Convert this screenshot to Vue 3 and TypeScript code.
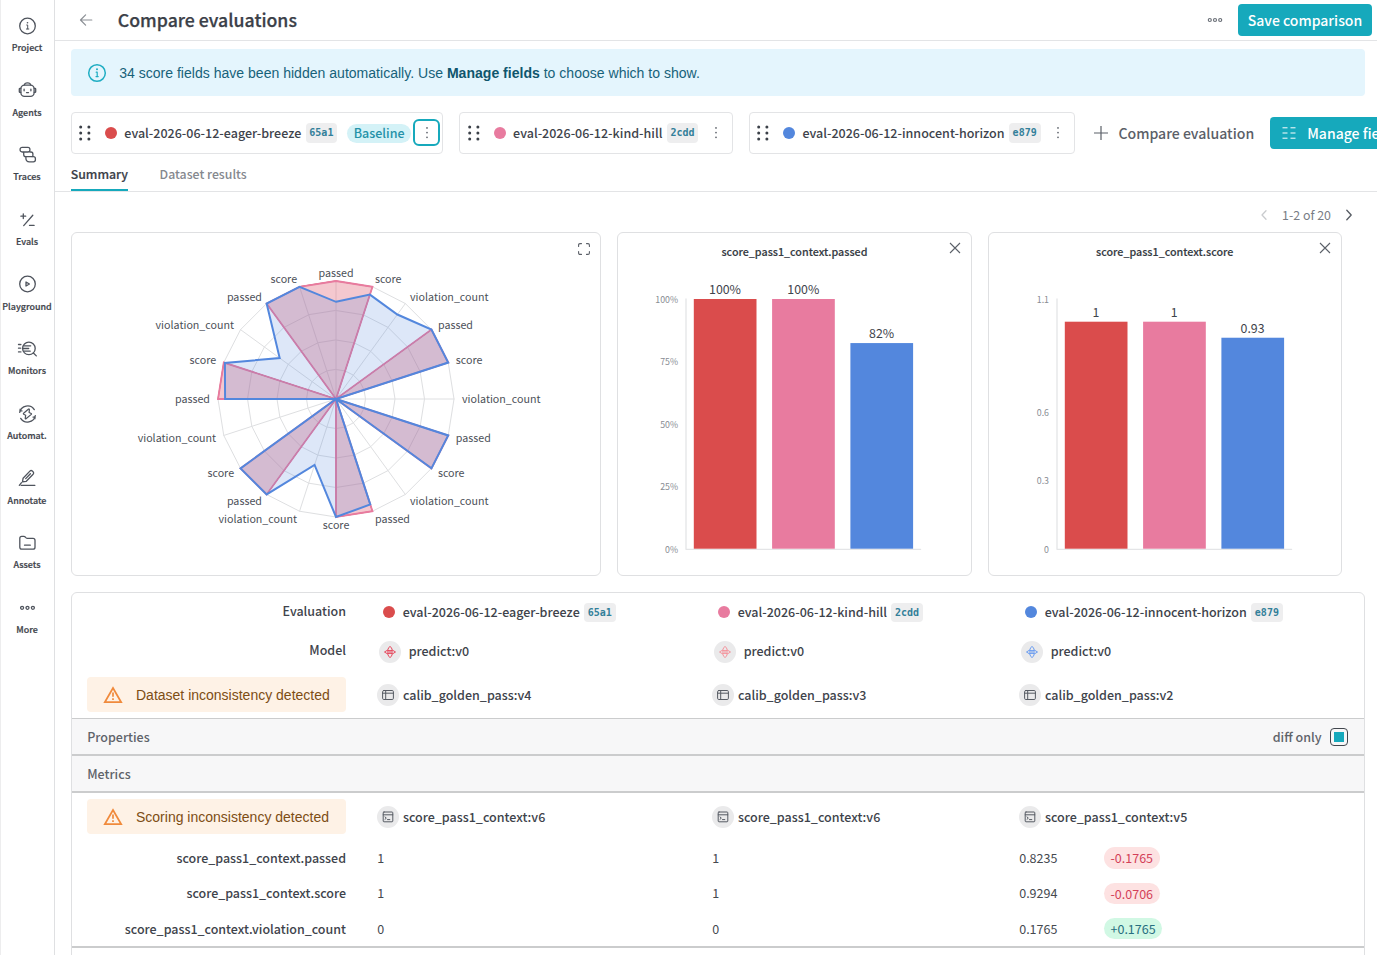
<script setup lang="ts">
interface Evaluation { name: string; hash: string; color: string; baseline?: boolean; dataset: string; scorer: string }
interface Bar { value: number; label: string }
interface BarChart { title: string; max: number; ticks: { y: number; text: string }[]; bars: Bar[] }

const nav = ['Project', 'Agents', 'Traces', 'Evals', 'Playground', 'Monitors', 'Automat.', 'Annotate', 'Assets', 'More']

const RED = '#da4c4c'
const PINK = '#e87b9f'
const BLUE = '#5387dd'

const evaluations: Evaluation[] = [
  { name: 'eval-2026-06-12-eager-breeze', hash: '65a1', color: RED, baseline: true, dataset: 'calib_golden_pass:v4', scorer: 'score_pass1_context:v6' },
  { name: 'eval-2026-06-12-kind-hill', hash: '2cdd', color: PINK, dataset: 'calib_golden_pass:v3', scorer: 'score_pass1_context:v6' },
  { name: 'eval-2026-06-12-innocent-horizon', hash: 'e879', color: BLUE, dataset: 'calib_golden_pass:v2', scorer: 'score_pass1_context:v5' },
]
const modelColors = ['#e5394f', '#f58a94', '#5c94f0']

const metrics = [
  { name: 'score_pass1_context.passed', values: ['1', '1', '0.8235'], delta: '-0.1765', good: false },
  { name: 'score_pass1_context.score', values: ['1', '1', '0.9294'], delta: '-0.0706', good: false },
  { name: 'score_pass1_context.violation_count', values: ['0', '0', '0.1765'], delta: '+0.1765', good: true },
]

/* Radar geometry */
const CX = 264
const CY = 166
const R = 118
const axes = [
  'passed', 'score', 'violation_count', 'passed', 'score', 'violation_count', 'passed', 'score', 'violation_count', 'passed',
  'score', 'violation_count', 'passed', 'score', 'violation_count', 'passed', 'score', 'violation_count', 'passed', 'score',
]
const full = axes.map((a) => (a === 'violation_count' ? 0 : 1))
const blueValues = [0.8235, 0.93, 0.885, 1, 1, 0, 1, 1, 0, 0.94, 1, 0.588, 1, 1, 0, 0.94, 0.99, 0.59, 1, 1]

function at(i: number, r: number): [number, number] {
  const t = (i * 18 * Math.PI) / 180
  return [CX + Math.sin(t) * r, CY - Math.cos(t) * r]
}
function polygon(values: number[]): string {
  return values.map((v, i) => at(i, v * R).map((n) => n.toFixed(2)).join(',')).join(' ')
}
const rings = [0.25, 0.5, 0.75, 1].map((k) => polygon(axes.map(() => k)))
const spokes = axes.map((_, i) => at(i, R))
const labels = axes.map((text, i) => {
  const [x, y] = at(i, 126)
  const anchor = i % 10 === 0 ? 'middle' : i < 10 ? 'start' : 'end'
  return { text, x, y: y + 4.2, anchor }
})
const series = [
  { points: polygon(full), color: RED, width: 1 },
  { points: polygon(full), color: PINK, width: 1.8 },
  { points: polygon(blueValues), color: BLUE, width: 2 },
]

/* Bar charts */
const charts: BarChart[] = [
  {
    title: 'score_pass1_context.passed',
    max: 1,
    ticks: [{ y: 67, text: '100%' }, { y: 129, text: '75%' }, { y: 191.5, text: '50%' }, { y: 254, text: '25%' }, { y: 316.5, text: '0%' }],
    bars: [{ value: 1, label: '100%' }, { value: 1, label: '100%' }, { value: 0.8235, label: '82%' }],
  },
  {
    title: 'score_pass1_context.score',
    max: 1.1,
    ticks: [{ y: 67, text: '1.1' }, { y: 179.5, text: '0.6' }, { y: 248, text: '0.3' }, { y: 316.5, text: '0' }],
    bars: [{ value: 1, label: '1' }, { value: 1, label: '1' }, { value: 0.9294, label: '0.93' }],
  },
]
const barHeight = (b: Bar, c: BarChart) => (b.value / c.max) * 249.7
const barColors = [RED, PINK, BLUE]
</script>

<template>
  <div class="app">
    <nav class="sidebar">
      <a v-for="item in nav" :key="item" class="nav-item">
        <svg class="nav-icon" viewBox="0 0 20 20">
          <template v-if="item === 'Project'">
            <circle cx="10" cy="10" r="7.8" />
            <path d="M9.2 9h1v3.8M8.9 13h2.4" stroke-width="1" /><circle cx="10" cy="6.8" r=".8" class="solid" />
          </template>
          <template v-else-if="item === 'Agents'">
            <rect x="3.4" y="5.2" width="13.2" height="11.2" rx="3.6" />
            <path d="M6.9 4.8c.2-1.6 1.6-2 3.1-2s2.9.4 3.1 2M3.3 8.3H2.5q-.7 0-.7.6v2.8q0 .6.7.6h.8M16.7 8.3h.8q.7 0 .7.6v2.8q0 .6-.7.6h-.8" />
            <path d="M6.6 9.2v1.6M13.4 9.2v1.6M9 12.6h2" stroke-width="1.3" />
          </template>
          <template v-else-if="item === 'Traces'">
            <rect x="2.6" y="2.3" width="9.8" height="4.7" rx="2" />
            <path d="M6.2 7.3v2.2q0 2.2 2.2 2.2h5.700q1.300 0 1.300-1.300V9q0-2-2-2h-1" />
            <path d="M8.400 12v1.300q0 3.500 3.500 3.500h4q2 0 2-2v-1q0-2.100-2.100-2.100h-1" />
          </template>
          <template v-else-if="item === 'Evals'">
            <path d="M3.400 6.200h4.800M5.800 3.800v4.800M6.200 15.600 15.300 5.200M12 15.400h4.600" />
          </template>
          <template v-else-if="item === 'Playground'">
            <circle cx="10" cy="10" r="7.800" /><path d="M8.500 8v4l3.400-2z" />
          </template>
          <template v-else-if="item === 'Monitors'">
            <circle cx="11.400" cy="9.400" r="6.300" />
            <path d="m15.900 14 2.900 2.900M6.200 6.800h7M5.600 9.500h5.600M6.200 12.200h6.500" />
            <path d="M1 5.500h2.400M1 9.200h2.200M1 12.900h2.400" stroke-dasharray="1.200 .9" />
          </template>
          <template v-else-if="item === 'Automat.'">
            <path d="M2.200 8.300A8 8 0 0 1 16.800 5.600M17.800 11.700A8 8 0 0 1 3.200 14.400" />
            <path d="M2.600 5.200v1.700h1.900M17.400 14.800v-1.700h-1.900M10.800 5.200 6.100 9.200q-.5.500.100 1l2 1-.5 3.200q.1.800.8.300l5.300-4.300q.500-.5-.1-.9l-2.100-1 .3-3q-.1-.9-1.100-.3z" stroke-width="1.200" />
          </template>
          <template v-else-if="item === 'Annotate'">
            <path d="M5 13.900l.6-3.700 6.800-7.100q1.200-1.200 2.500 0l.7.7q1.200 1.200 0 2.500l-6.800 7zM8.200 10.600l4.700-4.900" />
            <path d="M3.600 17.300h13.800M1.800 17.300l2.200-2.600" />
          </template>
          <template v-else-if="item === 'Assets'">
            <path d="M2.300 14.200V5.400q0-2 2-2h2q1 0 1.600.7l.7.800q.5.500 1.200.5h5.700q2 0 2 2v6.800q0 2-2 2H4.300q-2 0-2-2zM7 12.200h5.800" />
          </template>
          <template v-else>
            <circle cx="4.600" cy="9.800" r="1.500" /><circle cx="10" cy="9.800" r="1.500" /><circle cx="15.400" cy="9.800" r="1.500" />
          </template>
        </svg>
        <span>{{ item }}</span>
      </a>
    </nav>

    <main class="main">
      <header class="header">
        <svg class="back" viewBox="0 0 14 14"><path d="M12.800 7H1.600M6.600 1.900 1.500 7l5.100 5.100" /></svg>
        <h1>Compare evaluations</h1>
        <svg class="dots" viewBox="0 0 16 6"><circle cx="2.800" cy="3" r="1.500" /><circle cx="8" cy="3" r="1.500" /><circle cx="13.200" cy="3" r="1.500" /></svg>
        <button class="primary save">Save comparison</button>
      </header>

      <div class="banner">
        <svg viewBox="0 0 20 20"><circle cx="10" cy="10" r="8.300" /><path d="M9.200 9.200h1v4.200M9 13.600h2.200" stroke-width="1.200" /><circle cx="10" cy="6.300" r="1" class="solid" /></svg>
        <p>34 score fields have been hidden automatically. Use <b>Manage fields</b> to choose which to show.</p>
      </div>

      <div class="picker">
        <div v-for="e in evaluations" :key="e.hash" class="eval-card">
          <svg class="drag" viewBox="0 0 14 18">
            <template v-for="y in [3, 9, 15]" :key="y"><circle cx="2.700" :cy="y" r="1.500" /><circle cx="10.900" :cy="y" r="1.500" /></template>
          </svg>
          <i class="dot" :style="{ background: e.color }"></i>
          <span class="name">{{ e.name }}</span>
          <code class="hash">{{ e.hash }}</code>
          <span v-if="e.baseline" class="baseline">Baseline</span>
          <button class="kebab" :class="{ focused: e.baseline }">
            <svg viewBox="0 0 4 14"><circle cx="2" cy="1.900" r=".9" /><circle cx="2" cy="6.600" r=".9" /><circle cx="2" cy="11.300" r=".9" /></svg>
          </button>
        </div>
        <button class="add">
          <svg viewBox="0 0 14 14"><path d="M7 0v14M0 7h14" /></svg>Compare evaluation
        </button>
        <button class="primary manage">
          <svg viewBox="0 0 14 14"><path d="M.5 1.800h5M8.500 1.800h5M.5 7h5M8.500 7h5M.5 12.200h5M8.500 12.200h5" /></svg>Manage fields
        </button>
      </div>

      <div class="tabs">
        <a class="tab active">Summary</a>
        <a class="tab">Dataset results</a>
      </div>

      <div class="pager">
        <svg class="off" viewBox="0 0 8 12"><path d="M6 1.800 2 6l4 4.200" /></svg>
        <span>1-2 of 20</span>
        <svg viewBox="0 0 8 12"><path d="m1.800 1.200 4.400 4.800-4.400 4.800" /></svg>
      </div>

      <section class="charts">
        <div class="card radar">
          <svg class="plot" viewBox="0 0 529 342">
            <g class="grid">
              <polygon v-for="(p, i) in rings" :key="i" :points="p" />
              <line v-for="(s, i) in spokes" :key="'s' + i" :x1="CX" :y1="CY" :x2="s[0]" :y2="s[1]" />
            </g>
            <polygon v-for="(s, i) in series" :key="i" class="series" :points="s.points" :fill="s.color" :stroke="s.color" :stroke-width="s.width" />
            <text v-for="(l, i) in labels" :key="i" :x="l.x" :y="l.y" :text-anchor="l.anchor">{{ l.text }}</text>
          </svg>
          <svg class="corner expand" viewBox="0 0 12 12"><path d="M.6 3.500V2Q.6.6 2 .6h1.500M8.500.6H10q1.400 0 1.400 1.400v1.500M11.400 8.500V10q0 1.400-1.400 1.400H8.500M3.500 11.400H2Q.6 11.400.6 10V8.500" /></svg>
        </div>
        <div v-for="c in charts" :key="c.title" class="card bars">
          <h2>{{ c.title }}</h2>
          <svg class="plot" viewBox="0 0 352 342">
            <path class="axis" d="M68 66v250.300h234.600" />
            <text v-for="t in c.ticks" :key="t.text" class="tick" x="60" :y="t.y + 3.200" text-anchor="end">{{ t.text }}</text>
            <template v-for="(b, i) in c.bars" :key="i">
              <rect :x="75.800 + i * 78.300" :y="315.700 - barHeight(b, c)" width="62.700" :height="barHeight(b, c)" :fill="barColors[i]" />
              <text class="value" :x="107 + i * 78.300" :y="310.700 - barHeight(b, c)" text-anchor="middle">{{ b.label }}</text>
            </template>
          </svg>
          <svg class="corner close" viewBox="0 0 12 12"><path d="m1 1 10 10M11 1 1 11" /></svg>
        </div>
      </section>

      <section class="table">
        <div class="row r-eval">
          <div class="label">Evaluation</div>
          <div v-for="e in evaluations" :key="e.hash" class="cell">
            <i class="dot" :style="{ background: e.color }"></i><span class="name">{{ e.name }}</span><code class="hash">{{ e.hash }}</code>
          </div>
        </div>
        <div class="row r-model">
          <div class="label">Model</div>
          <div v-for="(e, i) in evaluations" :key="e.hash" class="cell model">
            <span class="disc">
              <svg viewBox="0 0 12 12" :style="{ stroke: modelColors[i] }"><path d="M4 3.200Q4.400 1.200 6 .5q1.600.7 2 2.700v5.600q-.4 2-2 2.700-1.600-.7-2-2.700zM3.400 4.200 .5 6l2.900 1.800M8.600 4.200 11.500 6 8.600 7.800M4 4.600h4M4 7.400h4M5.300 6h1.400" /></svg>
            </span>
            <span class="name">predict:v0</span>
          </div>
        </div>
        <div class="row r-data">
          <div class="warning">
            <svg viewBox="0 0 20 18"><path d="M10 2 18.200 16.200H1.800z" /><path d="M10 6.600v4.200M10 12.300v1.800" /></svg>Dataset inconsistency detected
          </div>
          <div v-for="e in evaluations" :key="e.hash" class="cell">
            <span class="disc"><svg viewBox="0 0 12 12"><rect x=".6" y="1.500" width="10.800" height="9" rx="1.200" /><path d="M.6 4.200h10.800M3.700 1.500v9" /></svg></span>
            <span class="name">{{ e.dataset }}</span>
          </div>
        </div>
        <div class="band first">
          <span>Properties</span>
          <label class="diff">diff only<i class="check"></i></label>
        </div>
        <div class="band"><span>Metrics</span></div>
        <div class="row r-score">
          <div class="warning">
            <svg viewBox="0 0 20 18"><path d="M10 2 18.200 16.200H1.800z" /><path d="M10 6.600v4.200M10 12.300v1.800" /></svg>Scoring inconsistency detected
          </div>
          <div v-for="e in evaluations" :key="e.hash" class="cell">
            <span class="disc"><svg viewBox="0 0 12 12"><rect x="1.200" y="1" width="9.600" height="9.800" rx=".8" /><path d="M1.200 3.800h9.600M3 5.900l1.300 1.200L3 8.300M5.500 8.600h2.300" /></svg></span>
            <span class="name">{{ e.scorer }}</span>
          </div>
        </div>
        <div v-for="m in metrics" :key="m.name" class="row r-metric">
          <div class="label">{{ m.name }}</div>
          <div v-for="(v, i) in m.values" :key="i" class="cell">
            <span class="num">{{ v }}</span>
            <span v-if="i === 2" class="delta" :class="{ good: m.good }">{{ m.delta }}</span>
          </div>
        </div>
        <div class="end"></div>
      </section>
    </main>
  </div>
</template>

<style>
html, body { margin: 0; overflow: hidden; background: #fff; }
</style>

<style scoped>
* { box-sizing: border-box; }
.app {
  display: flex;
  width: 1377px;
  height: 955px;
  overflow: hidden;
  font-family: "Noto Sans CJK SC", "Open Sans", sans-serif;
  font-weight: 500;
  font-size: 12.53px;
  line-height: 20px;
  color: #3e434b;
}
svg { display: block; flex: none; fill: none; stroke-linecap: round; stroke-linejoin: round; }
button { font: inherit; border: 0; background: none; padding: 0; white-space: nowrap; }

.sidebar { width: 55px; flex: none; border-right: 1px solid #dfe0e2; border-left: 1px solid #ededee; padding: 13.7px 1px 0 0; }
.nav-item { display: flex; flex-direction: column; align-items: center; height: 64.68px; font-size: 8.95px; line-height: 14px; color: #3e434b; -webkit-text-stroke: 0.2px #3e434b; }
.nav-item span { margin-top: 3.3px; white-space: nowrap; }
.nav-icon { width: 23px; height: 24px; padding: 1.5px; stroke: #4f545d; stroke-width: 1.3; }
.solid { fill: #4f545d; stroke: none; }

.main { flex: 1; min-width: 0; display: flex; flex-direction: column; }
.header { height: 41px; flex: none; border-bottom: 1px solid #e3e4e6; display: flex; align-items: center; padding: 0 5px 1px 24px; }
.back { width: 14px; height: 14px; stroke: #8b8f95; stroke-width: 1.2; }
h1 { margin: -2px 0 0 24.8px; font-size: 17.7px; line-height: 24px; font-weight: 500; color: #3b4048; -webkit-text-stroke: 0.25px #3b4048; }
.dots { width: 16px; height: 6px; margin-left: auto; margin-right: 15px; stroke: #6b7078; stroke-width: 1.2; }
.primary { background: #16a9bc; color: #fff; height: 32px; border-radius: 4px; font-size: 14.03px; line-height: 30px; }
.save { width: 134px; }

.banner { margin: 8px 12.5px 0 15.5px; height: 47px; flex: none; background: #e4f5fd; border-radius: 4px; display: flex; align-items: center; padding-left: 16.5px; font: 14.06px/20px "Liberation Sans", Arial, sans-serif; color: #17627a; }
.banner svg { width: 20px; height: 20px; stroke: #1fadc3; stroke-width: 1.5; margin-right: 12.2px; }
.banner .solid { fill: #1fadc3; }
.banner p { margin: 0; }
.banner b { color: #0f566d; }

.picker { display: flex; margin: 16px 0 0 15.5px; height: 42px; flex: none; align-items: center; }
.eval-card { flex: none; height: 42px; border: 1px solid #e3e4e6; border-radius: 4px; display: flex; align-items: center; padding: 0 2.2px 0 6px; margin-right: 16px; }
.drag { width: 14px; height: 18px; fill: #3b4048; margin-left: .8px; }
.dot { width: 12px; height: 12px; border-radius: 50%; flex: none; }
.eval-card .dot { margin: 0 7.5px 0 12.5px; }
.name { white-space: nowrap; }
.hash { font: bold 10px/19px "DejaVu Sans Mono", monospace; color: #33809a; background: #eeeeef; border-radius: 4px; height: 19.5px; padding: 0 3.8px; margin-left: 4.2px; }
.baseline { margin-left: 10px; height: 19px; line-height: 18px; padding: 0 6.5px; border-radius: 10px; background: #d4f2f7; color: #2491a8; }
.kebab { width: 27px; height: 27px; border: 2px solid transparent; border-radius: 6px; display: flex; align-items: center; justify-content: center; margin-left: 4.2px; position: relative; top: -.5px; }
.kebab.focused { border-color: #16a9bc; margin-left: 2px; }
.kebab svg { width: 4px; height: 14px; fill: #656a72; }
.add { display: flex; align-items: center; font-size: 14.08px; color: #5b6068; margin: 0 16px 0 3px; }
.add svg { width: 14px; height: 14px; stroke: #5b6068; stroke-width: 1.2; margin-right: 10.5px; stroke-linecap: butt; }
.manage { display: flex; align-items: center; padding-left: 12px; width: 140px; flex: none; }
.manage svg { width: 14px; height: 14px; stroke: #fff; stroke-width: 1; margin-right: 11px; stroke-linecap: butt; }

.tabs { height: 38px; flex: none; display: flex; gap: 31.5px; padding-left: 15.7px; border-bottom: 1px solid #e3e4e6; font-size: 12.3px; color: #85888e; }
.tab { height: 36.5px; line-height: 40px; border-bottom: 2px solid transparent; }
.tab.active { color: #3b4048; border-color: #16a9bc; -webkit-text-stroke: 0.2px #3b4048; }

.pager { height: 40px; flex: none; display: flex; justify-content: flex-end; align-items: center; padding: 6px 24px 0 0; font-size: 12.4px; font-weight: 400; color: #797d85; }
.pager svg { width: 8px; height: 12px; stroke: #565b63; stroke-width: 1.3; }
.pager svg.off { stroke: #c9cbce; }
.pager span { margin: 0 14px; position: relative; top: -.5px; }

.charts { display: flex; gap: 16px; margin-left: 15.5px; flex: none; }
.card { position: relative; height: 344px; border: 1px solid #dfe0e2; border-radius: 6px; flex: none; }
.radar { width: 530.8px; }
.bars { width: 354.3px; }
.plot { width: 100%; height: 342px; }
.radar .plot { width: 529px; }
.bars .plot { width: 352px; position: absolute; left: 0; top: 0; }
.bars h2 { margin: 10px 0 0; font-size: 10.74px; line-height: 18px; font-weight: 500; text-align: center; color: #363b43; -webkit-text-stroke: 0.15px #363b43; }
.corner { position: absolute; width: 12px; height: 12px; stroke: #5b6068; stroke-width: 1.1; }
.expand { top: 10px; right: 10.5px; }
.close { top: 9px; right: 10px; stroke-linecap: butt; }
.grid polygon, .grid line { stroke: #dedfe1; stroke-width: 1; }
.series { fill-opacity: 0.2; stroke-linejoin: miter; }
.radar text { font-size: 10.7px; font-weight: 400; fill: #4b4f57; }
.axis { stroke: #e4e5e7; stroke-width: 1.3; }
.tick { font-size: 8.8px; font-weight: 400; fill: #888c93; }
.value { font-size: 12.37px; font-weight: 400; fill: #3f444c; }

.table { margin: 16px 12.5px 0 15.5px; height: 380px; flex: none; border: 1px solid #dfe0e2; border-radius: 6px 6px 0 0; }
.row { display: grid; grid-template-columns: 274.5px 335px 307px 1fr; align-items: center; }
.label { text-align: right; font-size: 12.48px; }
.r-eval { height: 39px; }
.r-eval .name { position: relative; top: -1px; }
.r-model { height: 39px; }
.r-data { height: 47px; }
.r-score { height: 47px; }
.r-metric { height: 35.3px; }
.r-eval .label, .r-model .label { position: relative; top: -2px; }
.cell { display: flex; align-items: center; padding-left: 31.2px; }
.cell .dot { margin: 0 7.7px 0 5.8px; position: relative; top: -.5px; }
.disc { width: 22px; height: 22px; border-radius: 50%; background: #eaeaeb; display: flex; align-items: center; justify-content: center; margin-right: 3.7px; }
.disc svg { width: 12px; height: 12px; stroke: #565b63; stroke-width: 1; }
.model .disc { margin: 0 7.7px 0 1.8px; }
.model .name { position: relative; top: -.5px; }
.model .disc svg { stroke-width: .9; }
.warning { margin-left: 15.5px; height: 35px; border-radius: 4px; background: #fef2e6; display: flex; align-items: center; padding-left: 16px; font: 14px/20px "Liberation Sans", Arial, sans-serif; color: #7d4d14; white-space: nowrap; }
.warning svg { width: 20px; height: 18px; margin-right: 13px; stroke: #f08a3c; stroke-width: 1.7; stroke-linejoin: miter; stroke-linecap: butt; }
.band { height: 37.3px; background: #f7f7f8; border-bottom: 2px solid #cbcccd; padding: 0 16px 0 15.7px; display: flex; justify-content: space-between; align-items: center; font-size: 12.5px; color: #5f636a; }
.band.first { height: 38px; border-top: 1px solid #cbcccd; }
.diff { display: flex; align-items: center; gap: 8px; }
.check { width: 18px; height: 18px; border: 1.5px solid #41464e; border-radius: 4px; background: #16a9bc; background-clip: content-box; padding: 3px; }
.num { width: 84.8px; font-weight: 400; color: #45494f; }
.delta { height: 21.5px; line-height: 21px; padding: 0 6.5px; border-radius: 11px; background: #fde2e2; color: #d33f58; font-weight: 400; position: relative; top: .2px; }
.delta.good { background: #d1f8e4; color: #276e80; }
.end { border-top: 2px solid #cbcccd; }
</style>
